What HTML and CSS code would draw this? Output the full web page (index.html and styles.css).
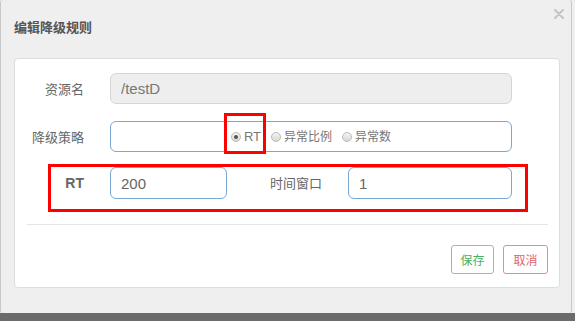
FILE: index.html
```html
<!DOCTYPE html>
<html lang="zh-CN">
<head>
  <meta charset="UTF-8" />
  <meta name="viewport" content="width=device-width, initial-scale=1.0"/>
  <title>编辑降级规则</title>
  <link rel="stylesheet" href="styles.css">
</head>
<body>
  <div class="modal">
    <div class="modal-header">
      <h3 class="title">编辑降级规则</h3>
      <span class="close">
        <svg width="10" height="10" viewBox="0 0 10 10">
          <path d="M1 1 L9 9 M9 1 L1 9" stroke="#c4c4c4" stroke-width="2" stroke-linecap="round" />
        </svg>
      </span>
    </div>

    <div class="card">
      <div class="row">
        <label class="label">资源名</label>
        <input class="field field-disabled" type="text" value="/testD" disabled />
      </div>

      <div class="row">
        <label class="label">降级策略</label>
        <div class="field field-radio">
          <label class="opt marked"><span class="dot checked"></span>RT</label>
          <label class="opt"><span class="dot"></span>异常比例</label>
          <label class="opt"><span class="dot"></span>异常数</label>
        </div>
      </div>

      <div class="window-row">
        <label class="label-rt">RT</label>
        <input class="field field-rt" type="text" value="200" />
        <label class="label-win">时间窗口</label>
        <input class="field field-win" type="text" value="1" />
      </div>

      <div class="divider"></div>

      <div class="actions">
        <button class="btn btn-save">保存</button>
        <button class="btn btn-cancel">取消</button>
      </div>
    </div>
  </div>
</body>
</html>
```

FILE: styles.css
```css
body {
  margin: 0;
  width: 575px;
  height: 321px;
  overflow: hidden;
  background: linear-gradient(#efefef 313px, #6b6b6b 313px);
  font-family: "Noto Sans CJK SC", "Liberation Sans", sans-serif;
}
.modal {
  position: relative;
  width: 572px;
  height: 313px;
  box-sizing: border-box;
  background: #efefef;
  border-left: 1px solid #c8c8c8;
  border-right: 1px solid #c8c8c8;
  border-radius: 3px;
}
.modal-header {
  height: 58px;
  box-sizing: border-box;
  padding: 17px 0 0 13px;
}
.title {
  margin: 0;
  font-size: 13px;
  line-height: 20px;
  font-weight: bold;
  color: #555;
}
.close {
  position: absolute;
  top: 9px;
  right: 7px;
  width: 10px;
  height: 10px;
  line-height: 0;
}
.card {
  margin-left: 13px;
  width: 546px;
  height: 230px;
  box-sizing: border-box;
  padding-top: 14px;
  background: #fff;
  border: 1px solid #ddd;
  border-radius: 4px;
}
.row {
  display: flex;
  align-items: center;
  height: 31px;
}
.row + .row {
  margin-top: 17px;
}
.label {
  width: 69px;
  margin-right: 26px;
  text-align: right;
  font-size: 13px;
  color: #666;
}
.field {
  height: 31px;
  box-sizing: border-box;
  margin: 0;
  padding: 0 0 0 10px;
  border: 1px solid #7ba7d7;
  border-radius: 6px;
  background: #fff;
  outline: none;
  font-family: "Liberation Sans Narrow", "Liberation Sans", sans-serif;
  font-size: 15px;
  color: #666;
}
.field-disabled {
  width: 402px;
  background: #eee;
  border-color: #d6d6d6;
  color: #777;
}
.field-radio {
  width: 402px;
  display: flex;
  align-items: center;
  justify-content: center;
  padding: 0;
}
.opt {
  position: relative;
  display: flex;
  align-items: center;
  line-height: 16px;
  margin: 0 5px;
  font-size: 12px;
  color: #777;
}
.opt:first-child {
  font-family: "Liberation Sans", sans-serif;
  font-size: 13px;
}
.marked::after {
  content: "";
  position: absolute;
  left: -7px;
  right: -5px;
  top: -16px;
  bottom: -9px;
  border: 3px solid #f00;
}
.dot {
  position: relative;
  width: 10px;
  height: 10px;
  box-sizing: border-box;
  margin-right: 3px;
  border: 1px solid #bbb;
  border-radius: 50%;
  background: linear-gradient(#f4f4f4, #d8d8d8);
}
.dot.checked::after {
  content: "";
  position: absolute;
  left: 2px;
  top: 2px;
  width: 4px;
  height: 4px;
  border-radius: 50%;
  background: #555;
}
.window-row {
  display: flex;
  align-items: flex-start;
  margin: 12px 0 0 33px;
  width: 480px;
  height: 48px;
  box-sizing: border-box;
  border: 3px solid #f00;
}
.label-rt {
  width: 33px;
  margin-right: 26px;
  text-align: right;
  line-height: 32px;
  font-family: "Liberation Sans", sans-serif;
  font-size: 14px;
  font-weight: bold;
  color: #666;
}
.label-win {
  width: 95px;
  margin-right: 26px;
  text-align: right;
  line-height: 32px;
  font-size: 13px;
  color: #666;
}
.field-rt {
  width: 117px;
  height: 32px;
}
.field-win {
  width: 164px;
  height: 32px;
}
.divider {
  height: 1px;
  margin: 12px 11px 0 12px;
  background: #e5e5e5;
}
.actions {
  display: flex;
  justify-content: flex-end;
  gap: 9px;
  margin: 20px 11px 0 0;
}
.btn {
  height: 29px;
  box-sizing: border-box;
  padding: 0;
  background: #fff;
  border-radius: 3px;
  font-family: "Noto Sans CJK SC", sans-serif;
  font-size: 12px;
  line-height: 27px;
}
.btn-save {
  width: 43px;
  border: 1px solid #7ccf8d;
  color: #4cae5c;
}
.btn-cancel {
  width: 45px;
  border: 1px solid #ec8a8e;
  color: #e0626a;
}
```
